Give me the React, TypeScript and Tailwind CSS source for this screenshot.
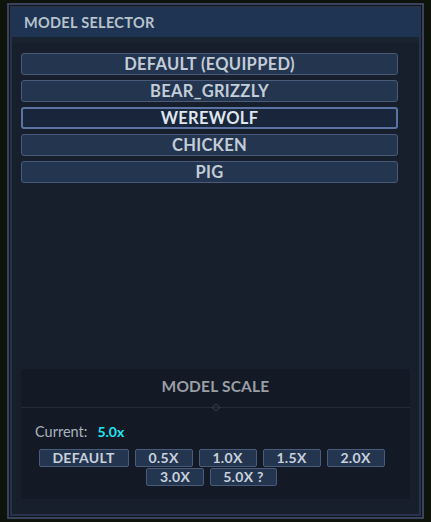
import React from 'react'

const models = ['DEFAULT (EQUIPPED)', 'BEAR_GRIZZLY', 'WEREWOLF', 'CHICKEN', 'PIG']
const scales = ['DEFAULT', '0.5X', '1.0X', '1.5X', '2.0X', '3.0X', '5.0X ?']

export default function App() {
  const selected = 'WEREWOLF'

  return (
    <div
      className="w-[431px] h-[522px] bg-[#0e130c] pt-[3px] pl-[7px] overflow-hidden"
      style={{ fontFamily: 'Lato, "Open Sans", sans-serif' }}
    >
      <div className="w-[417px] h-[516px] border-2 border-[#39435b] bg-[#10161f] p-[1px]">
        <div className="h-full border-2 border-[#28324a] bg-[#161f2b] flex flex-col">
          {/* header */}
          <div className="h-[29px] bg-[#1f3452] flex items-center pl-[12px] border-b-[5px] border-[#19232f] box-content">
            <span className="text-[14.5px] font-bold tracking-[0.3px] text-[#b6c3cc]">MODEL SELECTOR</span>
          </div>

          {/* model list */}
          <div className="flex-1 pt-[11px] pl-[9px] pr-[21px] flex flex-col gap-[5px]">
            {models.map(m => (
              <button
                key={m}
                className={`h-[22px] w-full rounded-[3px] flex items-center justify-center text-[16.5px] tracking-[0.3px] font-bold leading-none ${
                  m === selected
                    ? 'bg-[#19253a] border-2 border-[#5a73a3] text-[#dfe6ee]'
                    : 'bg-[#243550] border border-[#4a5a7a] text-[#c3cdd8]'
                }`}
              >
                {m}
              </button>
            ))}
          </div>

          {/* scale section */}
          <div className="mx-[9px] mb-[15px] h-[130px] rounded-[3px] bg-[#131a25] flex flex-col">
            <div className="h-[38px] pb-[3px] flex items-center justify-center">
              <span className="text-[15.5px] tracking-[0.2px] font-bold text-[#9a9fa6]">MODEL SCALE</span>
            </div>
            <div className="relative h-px bg-[#232b35]">
              <svg className="absolute left-1/2 -top-[4px] -ml-[5px]" width="10" height="9" viewBox="0 0 10 9">
                <path d="M5 1 L9 4.5 L5 8 L1 4.5 Z" fill="none" stroke="#2e3642" strokeWidth="1.2" />
              </svg>
            </div>
            <div className="pl-[14px] pt-[13px] flex items-baseline gap-[10px]">
              <span className="text-[14.5px] text-[#a9b3be]">Current:</span>
              <span className="text-[14px] font-bold text-[#22e3f2]">5.0x</span>
            </div>
            <div className="mt-[6px] pl-[12px] pr-[20px] flex flex-wrap justify-center gap-x-[6px] gap-y-[1px]">
              {scales.map(s => (
                <button
                  key={s}
                  className={`h-[18px] rounded-[2px] bg-[#243550] border border-[#4a5a7a] text-[14px] tracking-[0.3px] font-bold text-[#c8d1dc] flex items-center justify-center leading-none ${
                    s === 'DEFAULT' ? 'w-[90px]' : s === '5.0X ?' ? 'w-[67px]' : 'w-[58px]'
                  }`}
                >
                  {s}
                </button>
              ))}
            </div>
          </div>
        </div>
      </div>
    </div>
  )
}
